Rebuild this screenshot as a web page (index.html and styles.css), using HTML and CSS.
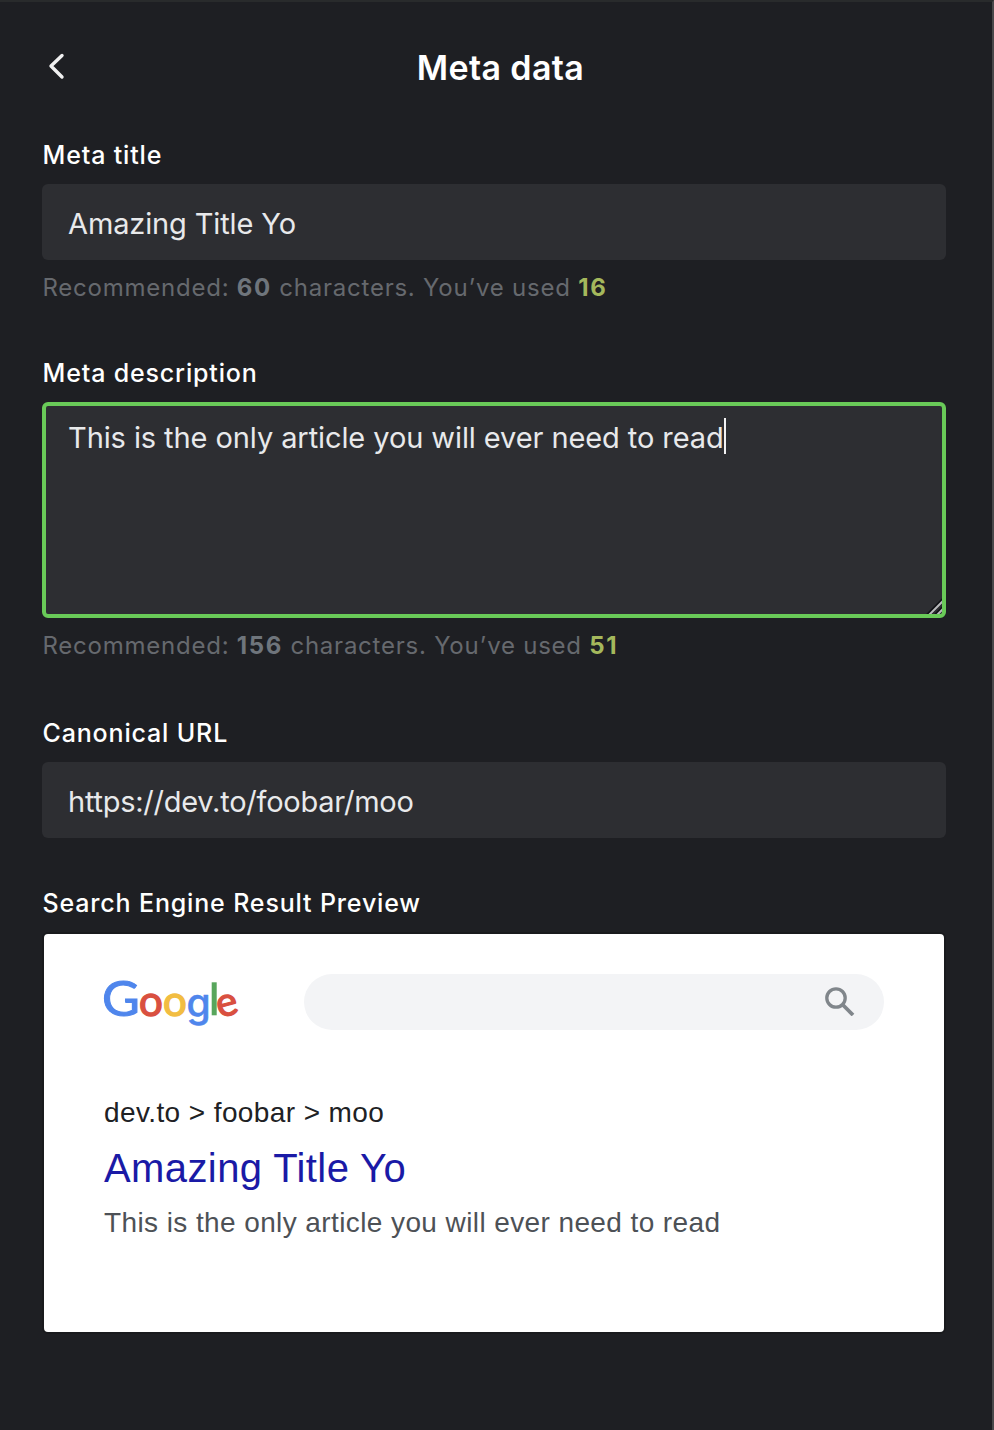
FILE: index.html
```html
<!DOCTYPE html>
<html lang="en">
<head>
<meta charset="utf-8">
<title>Meta data</title>
<link rel="stylesheet" href="styles.css">
</head>
<body>
<main class="panel">
  <header class="header">
    <svg class="back" viewBox="0 0 20 30" aria-label="Back"><path d="M14 4.500 3 15 14 26" fill="none" stroke="#f0f0f1" stroke-width="3.400" stroke-linecap="round" stroke-linejoin="round"/></svg>
    <h1 class="title"><span>Meta data</span></h1>
  </header>
  <section class="group group-title">
    <div class="label"><span>Meta title</span></div>
    <div class="field title-field"><span>Amazing Title Yo</span></div>
    <p class="hint"><span>Recommended: <b>60</b> characters. You’ve used <b class="used">16</b></span></p>
  </section>
  <section class="group group-description">
    <div class="label"><span>Meta description</span></div>
    <div class="field area"><span class="desc">This is the only article you will ever need to read</span><i class="caret"></i>
      <svg class="grip" viewBox="0 0 16 16"><path d="M1 18 18 1M9 18 18 9" stroke="#111216" stroke-width="4"/><path d="M3 17 17 3M11 17 17 11" stroke="#b9babc" stroke-width="2"/></svg>
    </div>
    <p class="hint"><span>Recommended: <b>156</b> characters. You’ve used <b class="used">51</b></span></p>
  </section>
  <section class="group group-url">
    <div class="label"><span>Canonical URL</span></div>
    <div class="field url"><span>https://dev.to/foobar/moo</span></div>
  </section>
  <section class="group">
    <div class="label"><span>Search Engine Result Preview</span></div>
    <div class="preview">
      <div class="searchbar">
        <svg class="logo" viewBox="0 0 136 46" role="img" aria-label="Google">
          <text class="logo-cap" transform="translate(-2 36) scale(1.080 1)" fill="#4f86ec" stroke="#4f86ec">G</text>
          <text class="logo-letter" x="35" y="36" fill="#d95040" stroke="#d95040">o</text>
          <text class="logo-letter" x="59" y="36" fill="#f2bd42" stroke="#f2bd42">o</text>
          <text class="logo-stem" x="82.500" y="36.500" fill="#4f86ec" stroke="#4f86ec">g</text>
          <rect x="107.700" y="2.300" width="5" height="33" fill="#58a65c"/>
          <text class="logo-e" transform="translate(115.500 38) rotate(-15)" fill="#d95040" stroke="#d95040">e</text>
        </svg>
        <div class="search"><svg class="glass" viewBox="0 0 30 30"><circle cx="11" cy="12" r="9.200" fill="none" stroke="#80868b" stroke-width="3.300"/><path d="M17.500 18.500 28 29" stroke="#80868b" stroke-width="3.800"/></svg></div>
      </div>
      <div class="crumb"><span>dev.to &gt; foobar &gt; moo</span></div>
      <div class="result"><span>Amazing Title Yo</span></div>
      <div class="snippet"><span>This is the only article you will ever need to read</span></div>
    </div>
  </section>
</main>
</body>
</html>
```
FILE: styles.css
```css
* { box-sizing: border-box; }
body { margin: 0; background: #1e1f23; font-family: Inter, "Liberation Sans", sans-serif; }
.panel { height: 1430px; padding: 0 46px 0 42px; border-top: 2px solid #292b2c; border-right: 2px solid #49494b; color: #fff; }
.header { display: grid; grid-template-columns: 20px 1fr 13px; height: 134px; padding-top: 49px; align-items: start; margin-left: 6px; }
.back { width: 20px; height: 30px; }
.title { margin: -7px 0 0; font-size: 34px; font-weight: 600; line-height: 48px; text-align: center; letter-spacing: 0.35px; }
.label { height: 48px; padding-left: 0.5px; line-height: 39px; font-size: 25px; font-weight: 500; letter-spacing: 0.84px; }
.field { height: 76px; padding: 0 26px; border-radius: 6px; background: #2d2e32; color: #e8e9eb; font-size: 29px; line-height: 80px; letter-spacing: -0.09px; }
.title-field { letter-spacing: -0.13px; }
.url { letter-spacing: -0.25px; }
.hint { margin: 0; height: 54px; padding-left: 0.5px; line-height: 55px; font-size: 24px; letter-spacing: 0.76px; color: #66696e; }
.hint b { font-weight: 700; color: #6f757c; letter-spacing: 1.6px; }
.hint .used { color: #a5b85c; }
.group-title { height: 218px; }
.group-description { height: 360px; }
.group-url { height: 170px; }
.area { position: relative; display: flex; align-items: flex-start; height: 216px; padding: 12px 22px; border: 4px solid #69ca58; line-height: 40px; white-space: nowrap; }
.caret { width: 2px; height: 36px; background: #f2f2f3; }
.grip { position: absolute; right: 0; bottom: 0; width: 16px; height: 16px; }
.preview { height: 402px; padding: 40px 60px; background: #fff; border: 2px solid #191a1d; border-radius: 6px; font-family: "Liberation Sans", Arial, sans-serif; }
.searchbar { display: flex; justify-content: space-between; height: 110px; }
.logo { width: 136px; height: 46px; margin-top: 6px; overflow: visible; font-family: Lato, sans-serif; }
.logo-cap { font-size: 48px; font-weight: 400; stroke-width: 1px; }
.logo-letter { font-size: 42px; font-weight: 400; stroke-width: 1.4px; }
.logo-e { font-size: 40px; font-weight: 400; stroke-width: 1.4px; }
.logo-stem { font-family: Inter, sans-serif; font-size: 39px; font-weight: 500; stroke-width: 0.5px; }
.search { display: flex; justify-content: flex-end; width: 580px; height: 56px; padding: 12px 29px; border-radius: 28px; background: #f3f4f6; }
.glass { width: 30px; height: 30px; }
.crumb { height: 56px; line-height: 57px; font-size: 28px; color: #202124; letter-spacing: 0.4px; }
.result { height: 54px; line-height: 57px; font-size: 40px; color: #1a1aa6; letter-spacing: 0.4px; }
.snippet { height: 50px; line-height: 57px; font-size: 28px; color: #4d5156; letter-spacing: 0.4px; }
```
